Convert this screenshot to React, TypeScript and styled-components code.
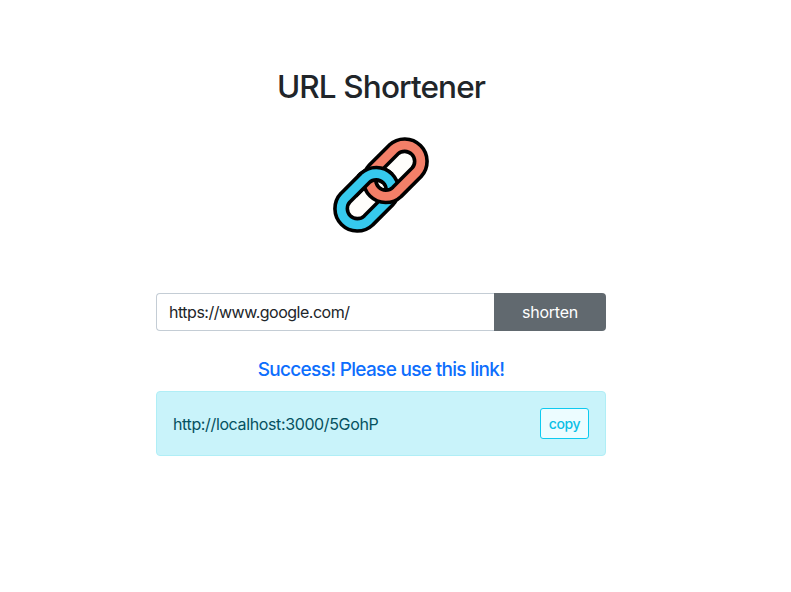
import React, { useState } from "react";
import styled, { createGlobalStyle } from "styled-components";

const GlobalStyle = createGlobalStyle`
  *, *::before, *::after { box-sizing: border-box; }
  body {
    margin: 0;
    background: #fff;
    color: #212529;
    font-family: Inter, "Liberation Sans", sans-serif;
    font-size: 16px;
    line-height: 1.5;
  }
`;

const Page = styled.main`
  width: 762px;
  min-height: 592px;
  padding-top: 68px;
  display: flex;
  flex-direction: column;
  align-items: center;
`;

const Title = styled.h1`
  margin: 0;
  font-size: 31.5px;
  font-weight: 500;
  line-height: 37px;
  letter-spacing: -0.87px;
  white-space: nowrap;
`;

const Logo = styled.svg`
  display: block;
  width: 96px;
  height: 96px;
  margin: 32px 0 60px;
`;

const Form = styled.form`
  display: flex;
  width: 450px;
  height: 38px;
`;

const UrlInput = styled.input`
  flex: 1;
  min-width: 0;
  padding: 6px 12px;
  border: 1px solid #c4cdd5;
  border-right: 0;
  border-radius: 4px 0 0 4px;
  background: #fff;
  color: #212529;
  font: inherit;
  letter-spacing: -0.49px;
  outline: none;
`;

const SubmitButton = styled.button`
  width: 112px;
  padding: 0;
  border: 0;
  border-radius: 0 4px 4px 0;
  background: #61696f;
  color: #fff;
  font: inherit;
  letter-spacing: -0.25px;
`;

const Message = styled.p`
  margin: 25px 0 7px;
  color: #0d6efd;
  font-size: 19px;
  font-weight: 500;
  line-height: 28px;
  letter-spacing: -0.68px;
  white-space: nowrap;
`;

const Result = styled.section`
  display: flex;
  align-items: center;
  justify-content: space-between;
  width: 450px;
  height: 65px;
  padding: 0 16px;
  border: 1px solid #b0eef6;
  border-radius: 4px;
  background: #c9f3fa;
  color: #055160;
`;

const ShortUrl = styled.span`
  letter-spacing: -0.37px;
`;

const CopyButton = styled.button`
  width: 49px;
  height: 31px;
  padding: 0;
  border: 1px solid #0dcaf0;
  border-radius: 3px;
  background: #ecfcff;
  color: #0dbfe6;
  font: inherit;
  font-size: 14px;
  font-weight: 500;
  letter-spacing: -0.35px;
`;

const BLUE = "M12.55 60.55 L32.05 41.05 A16.2 16.2 0 0 1 54.95 63.95 L35.45 83.45 A16.2 16.2 0 0 1 12.55 60.55 Z";
const CORAL = "M60.55 12.55 L41.05 32.05 A16.2 16.2 0 0 0 63.95 54.95 L83.45 35.45 A16.2 16.2 0 0 0 60.55 12.55 Z";

function ChainLink({ d, color }: { d: string; color: string }) {
  return (
    <g fill="none">
      <path d={d} stroke="#000" strokeWidth="16" />
      <path d={d} stroke={color} strokeWidth="8.8" />
    </g>
  );
}

function ChainLogo() {
  return (
    <Logo viewBox="0 0 96 96" aria-label="Linked chain">
      <defs>
        <mask id="upperSide" maskUnits="userSpaceOnUse" x="0" y="0" width="96" height="96">
          <path d="M24 0H96L24 72Z" fill="#fff" />
        </mask>
      </defs>
      <path d={BLUE} fill="#fffefb" />
      <path d={CORAL} fill="#fffefb" />
      <ChainLink d={BLUE} color="#36c9ed" />
      <ChainLink d={CORAL} color="#f37f68" />
      <g mask="url(#upperSide)">
        <ChainLink d={BLUE} color="#36c9ed" />
      </g>
    </Logo>
  );
}

export default function App() {
  const [url, setUrl] = useState("https://www.google.com/");
  const shortUrl = "http://localhost:3000/5GohP";

  return (
    <>
      <GlobalStyle />
      <Page>
        <Title>URL Shortener</Title>
        <ChainLogo />
        <Form onSubmit={(e) => e.preventDefault()}>
          <UrlInput value={url} onChange={(e) => setUrl(e.target.value)} aria-label="URL" />
          <SubmitButton type="submit">shorten</SubmitButton>
        </Form>
        <Message>Success! Please use this link!</Message>
        <Result>
          <ShortUrl>{shortUrl}</ShortUrl>
          <CopyButton type="button" onClick={() => navigator.clipboard?.writeText(shortUrl)}>
            copy
          </CopyButton>
        </Result>
      </Page>
    </>
  );
}
